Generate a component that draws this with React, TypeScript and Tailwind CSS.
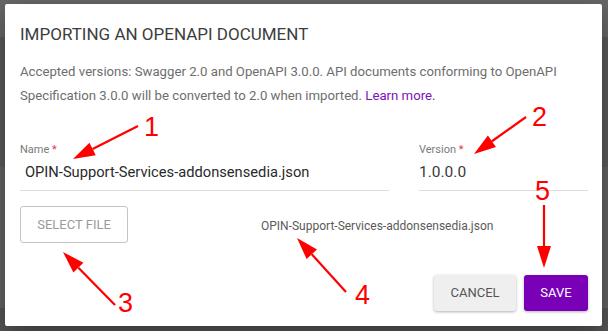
import React from "react";

type Arrow = { x1: number; y1: number; x2: number; y2: number };

const arrows: Arrow[] = [
  { x1: 138, y1: 126, x2: 73, y2: 159 },
  { x1: 526, y1: 117, x2: 474, y2: 154 },
  { x1: 115, y1: 305, x2: 63, y2: 252 },
  { x1: 346, y1: 292, x2: 297, y2: 238 },
  { x1: 544, y1: 205, x2: 544, y2: 268 },
];

function head(a: Arrow) {
  const dx = a.x2 - a.x1;
  const dy = a.y2 - a.y1;
  const len = Math.sqrt(dx * dx + dy * dy);
  const ux = dx / len;
  const uy = dy / len;
  const L = 22;
  const W = 7;
  const bx = a.x2 - ux * L;
  const by = a.y2 - uy * L;
  const px = -uy;
  const py = ux;
  return {
    pts: `${a.x2},${a.y2} ${bx + px * W},${by + py * W} ${bx - px * W},${by - py * W}`,
    bx,
    by,
  };
}

const numbers = [
  { t: "1", x: 144, y: 114 },
  { t: "2", x: 532, y: 104 },
  { t: "5", x: 535, y: 178 },
  { t: "3", x: 118, y: 290 },
  { t: "4", x: 355, y: 282 },
];

export default function App() {
  return (
    <div
      className="relative w-[608px] h-[331px] overflow-hidden bg-[#5d5d5d]"
      style={{ fontFamily: "Roboto, 'Liberation Sans', sans-serif" }}
    >
      {/* backdrop page */}
      <div className="flex flex-col w-full h-full">
        <div className="h-[37px] bg-[#676767]" />
        <div className="h-[130px] bg-[#5a5a5a]" />
        <div className="h-[141px] bg-[#626262]" />
        <div className="flex-1 bg-[#555555]" />
      </div>

      {/* dialog */}
      <div className="absolute left-[5px] top-[4px] w-[597px] h-[322px] bg-white rounded-[2px] shadow-[0_8px_24px_rgba(0,0,0,0.35)] pl-[15px] pr-[14px] pt-[18px] flex flex-col">
        <div className="text-[17px] leading-[24px] text-[#3d3d3d]">
          IMPORTING AN OPENAPI DOCUMENT
        </div>
        <p className="mt-[13.5px] text-[13.2px] leading-[24px] text-[#6e6e6e]">
          Accepted versions: Swagger 2.0 and OpenAPI 3.0.0. API documents conforming to OpenAPI
          Specification 3.0.0 will be converted to 2.0 when imported.{" "}
          <a className="text-[#7c12b8]">Learn more.</a>
        </p>

        <div className="mt-[35.5px] flex gap-[30px]">
          <div className="w-[369px] flex flex-col border-b border-[#dcdcdc] pb-[7px]">
            <div className="text-[11px] leading-[13px] text-[#7a7a7a]">
              Name <span className="text-[#e8334a]">*</span>
            </div>
            <div className="mt-[5px] pl-[5px] text-[14.7px] leading-[22px] text-[#2a2a2a]">
              OPIN-Support-Services-addonsensedia.json
            </div>
          </div>
          <div className="flex-1 flex flex-col border-b border-[#dcdcdc] pb-[7px]">
            <div className="text-[11px] leading-[13px] text-[#7a7a7a]">
              Version <span className="text-[#e8334a]">*</span>
            </div>
            <div className="mt-[5px] text-[15.5px] leading-[22px] text-[#3a3a3a]">1.0.0.0</div>
          </div>
        </div>

        <div className="mt-[15px] flex items-center">
          <div className="w-[108px] h-[37px] border border-[#c4c4c4] rounded-[3px] flex items-center justify-center text-[13px] text-[#9a9a9a]">
            SELECT FILE
          </div>
          <div className="ml-[133px] pt-[3px] text-[12px] text-[#5a5a5a]">
            OPIN-Support-Services-addonsensedia.json
          </div>
        </div>

        <div className="mt-[32px] flex justify-end gap-[8px]">
          <div className="w-[82px] h-[36px] rounded-[3px] bg-[#efefef] shadow-[0_1px_3px_rgba(0,0,0,0.3)] flex items-center justify-center text-[13px] text-[#555555]">
            CANCEL
          </div>
          <div className="w-[64px] h-[36px] rounded-[3px] bg-[#7a00b8] shadow-[0_1px_3px_rgba(0,0,0,0.3)] flex items-center justify-center text-[13px] text-white">
            SAVE
          </div>
        </div>
      </div>

      {/* annotations */}
      <svg className="absolute left-0 top-0" width="608" height="331" viewBox="0 0 608 331">
        {arrows.map((a, i) => {
          const h = head(a);
          return (
            <g key={i}>
              <line x1={a.x1} y1={a.y1} x2={h.bx} y2={h.by} stroke="#ff0000" strokeWidth="2.2" />
              <polygon points={h.pts} fill="#ff0000" />
            </g>
          );
        })}
      </svg>
      {numbers.map((n) => (
        <span
          key={n.t}
          className="absolute text-[27px] leading-[27px] text-[#ff0000]"
          style={{ left: n.x, top: n.y, fontFamily: "'Liberation Sans', sans-serif" }}
        >
          {n.t}
        </span>
      ))}
    </div>
  );
}
